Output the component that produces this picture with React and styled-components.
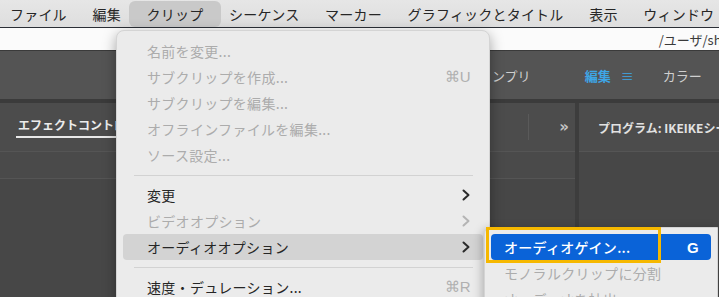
import React from 'react';
import styled, { createGlobalStyle } from 'styled-components';

const GlobalStyle = createGlobalStyle`
  * { box-sizing: border-box; }
  html, body { margin: 0; padding: 0; background: #474747; }
  body { font-family: "Noto Sans CJK JP", "Noto Sans", sans-serif; }
`;

// --- data ---
const menuBar = ['ファイル', '編集', 'クリップ', 'シーケンス', 'マーカー', 'グラフィックとタイトル', '表示', 'ウィンドウ'];

const clipMenu = [
  { label: '名前を変更...', disabled: true },
  { label: 'サブクリップを作成...', disabled: true, key: '⌘U' },
  { label: 'サブクリップを編集...', disabled: true },
  { label: 'オフラインファイルを編集...', disabled: true },
  { label: 'ソース設定...', disabled: true },
  { sep: true },
  { label: '変更', sub: true },
  { label: 'ビデオオプション', sub: true, disabled: true },
  { label: 'オーディオオプション', sub: true, hover: true },
  { sep: true },
  { label: '速度・デュレーション...', key: '⌘R' },
];

const audioMenu = [
  { label: 'オーディオゲイン...', key: 'G', active: true },
  { label: 'モノラルクリップに分割', disabled: true },
  { label: 'オーディオを抽出', disabled: true },
];

// --- layout ---
const Screen = styled.div`
  position: relative;
  width: 719px;
  height: 297px;
  overflow: hidden;
  background: #474747;
`;

const MenuBar = styled.div`
  display: flex;
  align-items: center;
  gap: 25.7px;
  height: 28px;
  padding-left: 10px;
  background: linear-gradient(#e6e6e6, #dedede);
  border-bottom: 1px solid #2b2f36;
  white-space: nowrap;
`;

const MenuTitle = styled.div`
  position: relative;
  display: flex;
  align-items: center;
  height: 26px;
  font-size: 14px;
  color: #262626;
  letter-spacing: 0.2px;
  ${p => p.$open && `
    margin: 0 -18px;
    padding: 0 18px;
    background: #c9c9c9;
    border-radius: 6px;
  `}
`;

const TitleBar = styled.div`
  display: flex;
  justify-content: flex-end;
  align-items: center;
  height: 23px;
  background: #fbfbfb;
  border-bottom: 1px solid #3a3a3a;
  font-size: 13px;
  color: #3a3a3a;
  white-space: nowrap;
  overflow: hidden;
`;

const PathText = styled.span`
  margin-right: -14px;
`;

const WorkspaceBar = styled.div`
  display: flex;
  align-items: center;
  height: 48px;
  padding-left: 492px;
  background: #545454;
  font-size: 13px;
  color: #cfcfcf;
  white-space: nowrap;
`;

const WorkspaceTab = styled.span`
  color: ${p => (p.$active ? '#3ea6e6' : '#cfcfcf')};
  font-weight: ${p => (p.$bold ? 700 : 400)};
  margin-left: ${p => p.$gap || 0}px;
`;

const Divider = styled.div`
  height: 4px;
  background: #3b3b3b;
`;

const Panels = styled.div`
  display: flex;
  height: 193px;
`;

const Panel = styled.div`
  display: flex;
  flex-direction: column;
  width: ${p => (p.$w ? `${p.$w}px` : 'auto')};
  flex: ${p => (p.$w ? 'none' : 1)};
  background: #474747;
  border-right: ${p => (p.$w ? '4px solid #3d3d3d' : 'none')};
  overflow: hidden;
`;

const PanelHeader = styled.div`
  display: flex;
  align-items: center;
  height: 49px;
  padding: 0 0 0 18px;
  background: #4c4c4c;
  border-bottom: 1px solid #555;
  font-size: 12px;
  font-weight: 700;
  color: #ececec;
  white-space: nowrap;
`;

const HeaderTab = styled.span`
  padding: 0 0 3px 2px;
  margin-left: -2px;
  border-bottom: 2px solid #e8e8e8;
`;

const HeaderSpacer = styled.div`
  flex: 1;
`;

const VLine = styled.div`
  width: 1px;
  height: 26px;
  background: #5a5a5a;
  margin-right: 30px;
`;

const More = styled.span`
  font-family: "DejaVu Sans", sans-serif;
  font-size: 15px;
  font-weight: 700;
  color: #c4c4c4;
  margin-right: 6px;
  line-height: 1;
`;

const SubRow = styled.div`
  height: 27px;
  background: #4a4a4a;
  border-bottom: 1px solid #555;
`;

const ProgramTitle = styled.span`
  margin-left: 1px;
  color: #e2e2e2;
`;

// --- menus ---
const Dropdown = styled.div`
  position: absolute;
  left: 116px;
  top: 30px;
  width: 374px;
  height: 290px;
  padding: 7px 6px 0 6px;
  background: #ebebeb;
  border: 1px solid #d4d4d4;
  border-radius: 8px 8px 0 0;
  box-shadow: 0 4px 14px rgba(0, 0, 0, 0.35);
`;

const SubMenu = styled(Dropdown)`
  left: 484px;
  top: 227px;
  width: 234px;
  padding-top: 6px;
  border-radius: 7px 0 0 0;
  box-shadow: -2px 2px 10px rgba(0, 0, 0, 0.25);
`;

const Item = styled.div`
  display: flex;
  align-items: center;
  height: 26px;
  padding: 0 12px 0 ${p => p.$indent || 24}px;
  font-size: 14px;
  letter-spacing: 0.3px;
  white-space: nowrap;
  border-radius: 4px;
  color: ${p => (p.$active ? '#fff' : p.$disabled ? '#acacac' : '#262626')};
  background: ${p => (p.$active ? '#0a63d8' : p.$hover ? '#d3d3d3' : 'transparent')};
  font-weight: ${p => (p.$active ? 500 : 400)};
`;

const Label = styled.span`
  flex: 1;
`;

const Shortcut = styled.span`
  font-family: "Liberation Sans", "Noto Sans", sans-serif;
  font-size: 15px;
  color: ${p => (p.$active ? '#fff' : '#b0b0b0')};
  font-weight: ${p => (p.$active ? 700 : 400)};
`;

const Separator = styled.div`
  height: 1px;
  margin: 7px 10px 6px 11px;
  background: #d2d2d2;
`;

const Highlight = styled.div`
  position: absolute;
  left: 486px;
  top: 227px;
  width: 175px;
  height: 36px;
  border: 3px solid #f6b800;
`;

const Chevron = ({ color }) => (
  <svg width="10" height="12" viewBox="0 0 10 12">
    <polyline points="2.5,1.5 7.5,6 2.5,10.5" fill="none" stroke={color} strokeWidth="2" strokeLinecap="round" strokeLinejoin="round" />
  </svg>
);

export default function App() {
  return (
    <>
      <GlobalStyle />
      <Screen>
        <MenuBar>
          {menuBar.map(m => (
            <MenuTitle key={m} $open={m === 'クリップ'}>{m}</MenuTitle>
          ))}
        </MenuBar>
        <TitleBar><PathText>/ユーザ/shio</PathText></TitleBar>
        <WorkspaceBar>
          <WorkspaceTab>ンプリ</WorkspaceTab>
          <WorkspaceTab $active $bold $gap={54}>編集</WorkspaceTab>
          <WorkspaceTab $active $gap={10}>≡</WorkspaceTab>
          <WorkspaceTab $gap={29}>カラー</WorkspaceTab>
        </WorkspaceBar>
        <Divider />
        <Panels>
          <Panel $w={579}>
            <PanelHeader>
              <HeaderTab>エフェクトコントロール</HeaderTab>
              <HeaderSpacer />
              <VLine />
              <More>»</More>
            </PanelHeader>
            <SubRow />
          </Panel>
          <Panel>
            <PanelHeader>
              <ProgramTitle>プログラム: IKEIKEシーケンス</ProgramTitle>
            </PanelHeader>
          </Panel>
        </Panels>

        <Dropdown>
          {clipMenu.map((it, i) =>
            it.sep ? (
              <Separator key={i} />
            ) : (
              <Item key={i} $disabled={it.disabled} $hover={it.hover}>
                <Label>{it.label}</Label>
                {it.key && <Shortcut>{it.key}</Shortcut>}
                {it.sub && <Chevron color={it.disabled ? '#b4b4b4' : '#2a2a2a'} />}
              </Item>
            )
          )}
        </Dropdown>

        <SubMenu>
          {audioMenu.map((it, i) => (
            <Item key={i} $indent={13} $active={it.active} $disabled={it.disabled}>
              <Label>{it.label}</Label>
              {it.key && <Shortcut $active>{it.key}</Shortcut>}
            </Item>
          ))}
        </SubMenu>
        <Highlight />
      </Screen>
    </>
  );
}
